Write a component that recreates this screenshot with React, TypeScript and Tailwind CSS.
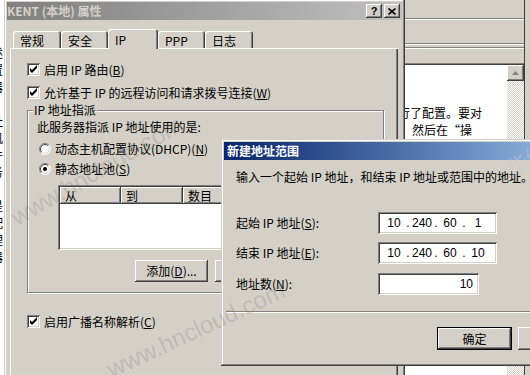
import React from 'react';

const raised =
  'bg-[#d4d0c8] shadow-[inset_-1px_-1px_#404040,inset_1px_1px_#ffffff,inset_-2px_-2px_#808080]';
const sunken =
  'bg-white shadow-[inset_1px_1px_#808080,inset_-1px_-1px_#ffffff,inset_2px_2px_#404040,inset_-2px_-2px_#d4d0c8]';
const frame =
  'bg-[#d4d0c8] shadow-[inset_-1px_-1px_#404040,inset_1px_1px_#d4d0c8,inset_-2px_-2px_#808080,inset_2px_2px_#ffffff]';

function Check({ checked = false }: { checked?: boolean }) {
  return (
    <span className={`relative block w-[13px] h-[13px] shrink-0 ${sunken}`}>
      {checked && (
        <svg className="absolute left-0 top-0" width="13" height="13" viewBox="0 0 13 13">
          <path d="M3 5 L5 7 L10 2 L10 5 L5 10 L3 8 Z" fill="#000" />
        </svg>
      )}
    </span>
  );
}

function Radio({ on = false }: { on?: boolean }) {
  return (
    <svg width="12" height="12" viewBox="0 0 12 12" className="shrink-0">
      <circle cx="6" cy="6" r="5.5" fill="#fff" />
      <path d="M2.1 9.9 A5.5 5.5 0 0 1 9.9 2.1" fill="none" stroke="#808080" />
      <path d="M2.8 9.2 A4.5 4.5 0 0 1 9.2 2.8" fill="none" stroke="#404040" />
      <path d="M9.9 2.1 A5.5 5.5 0 0 1 2.1 9.9" fill="none" stroke="#ffffff" />
      <path d="M9.2 2.8 A4.5 4.5 0 0 1 2.8 9.2" fill="none" stroke="#d4d0c8" />
      {on && <circle cx="6" cy="6" r="2" fill="#000" />}
    </svg>
  );
}

function IpBox({ parts }: { parts: string[] }) {
  return (
    <div className={`w-[119px] h-[22px] shrink-0 flex items-center pl-[5px] font-['Liberation_Sans',sans-serif] text-[12px] ${sunken}`}>
      {parts.map((p, i) => (
        <React.Fragment key={i}>
          {i > 0 && <span className="w-[6px] text-center">.</span>}
          <span className="w-[22px] text-center">{p}</span>
        </React.Fragment>
      ))}
    </div>
  );
}

const tabs = [
  { label: '常规', w: 'w-[48px]' },
  { label: '安全', w: 'w-[47px]' },
  { label: 'IP', w: 'w-[50px]', sel: true },
  { label: 'PPP', w: 'w-[47px]' },
  { label: '日志', w: 'w-[48px]' },
];

const sideChars = ['述', '置', '器', '。', '址', '机', '件', '务', '，', '是', '配', '理', '器'];

export default function App() {
  return (
    <div className="relative w-[530px] h-[375px] overflow-hidden bg-[#d4d0c8] text-black text-[12px] leading-[14px] font-['Noto_Sans_CJK_SC',sans-serif]">
      {/* window behind, left edge */}
      <div className="absolute left-0 top-0 w-[5px] h-full bg-white overflow-hidden">
        <div className="ml-[-9px] pt-[44px] flex flex-col leading-[17px]">
          {sideChars.map((c, i) => (
            <span key={i}>{c}</span>
          ))}
        </div>
      </div>

      {/* window behind, right side */}
      <div className="absolute left-[380px] top-0 w-[150px] h-[375px] bg-[#d4d0c8]">
        <div className="w-[145px] h-full border-r border-[#404040] flex flex-col">
          <div className="h-[18px] shrink-0" />
          <div className="h-px bg-[#808080] shrink-0" />
          <div className="h-px bg-white shrink-0" />
          <div className="h-[23px] shrink-0" />
          <div className="h-px bg-[#808080] shrink-0" />
          <div className="h-px bg-white shrink-0" />
          <div className="h-[2px] shrink-0" />
          <div className="h-px bg-[#808080] shrink-0" />
          <div className="h-px bg-white shrink-0" />
          <div className="h-[14px] shrink-0" />
          <div className="h-px bg-[#808080] shrink-0" />
          <div className="h-px bg-[#404040] shrink-0" />
          <div className="flex flex-1 bg-white">
            <div className="w-[127px] pt-[39px] leading-[17px] whitespace-nowrap overflow-hidden">
              <div className="pl-[18px]">行了配置。要对</div>
              <div className="pl-[32px]">然后在“操</div>
            </div>
            <div className="w-[17px] bg-[repeating-conic-gradient(#d4d0c8_0%_25%,#ffffff_0%_50%)] bg-[length:2px_2px]">
              <div className={`h-[16px] flex items-center justify-center ${raised}`}>
                <svg width="7" height="4" viewBox="0 0 7 4">
                  <path d="M3.5 0 L7 4 L0 4 Z" fill="#808080" />
                </svg>
              </div>
            </div>
          </div>
        </div>
      </div>

      {/* properties dialog */}
      <div className={`absolute left-[4px] top-[-1px] w-[401px] h-[392px] p-[3px] ${frame}`}>
        <div className="h-[18px] flex items-center justify-between pr-[2px] bg-linear-to-r from-[#808080] to-[#c0c0c0]">
          <span className="font-bold text-[#d4d0c8] whitespace-nowrap">KENT (本地) 属性</span>
          <div className="flex gap-[2px]">
            <div className={`w-[16px] h-[14px] flex items-center justify-center font-['Liberation_Sans',sans-serif] font-bold text-[11px] ${raised}`}>?</div>
            <div className={`w-[16px] h-[14px] flex items-center justify-center ${raised}`}>
              <svg width="8" height="7" viewBox="0 0 8 7">
                <path d="M0.5 0.5 L7.5 6.5 M7.5 0.5 L0.5 6.5" stroke="#000" strokeWidth="1.6" />
              </svg>
            </div>
          </div>
        </div>

        <div className="ml-[3px] mt-[9px] w-[388px]">
          <div className="flex items-end h-[19px] pl-[3px]">
            {tabs.map((t) =>
              t.sel ? (
                <div
                  key={t.label}
                  className={`relative z-10 -mb-px h-[20px] ${t.w} shrink-0 pl-[7px] pt-[4px] bg-[#d4d0c8] rounded-t-[3px] shadow-[inset_1px_1px_#ffffff,inset_-1px_0_#404040,inset_-2px_0_#808080]`}
                >
                  {t.label}
                </div>
              ) : (
                <div
                  key={t.label}
                  className={`h-[17px] ${t.w} shrink-0 pl-[7px] pt-[3px] bg-[#d4d0c8] rounded-t-[3px] shadow-[inset_1px_1px_#ffffff,inset_-1px_0_#404040,inset_-2px_0_#808080]`}
                >
                  {t.label}
                </div>
              )
            )}
          </div>

          <div className="h-[330px] pl-[17px] pt-[15px] shadow-[inset_1px_1px_#ffffff,inset_-1px_-1px_#404040,inset_-2px_-2px_#808080]">
            <div className="flex items-center gap-[4px] h-[13px]">
              <Check checked />
              <span className="whitespace-nowrap">启用 IP 路由(<u>B</u>)</span>
            </div>
            <div className="mt-[10px] flex items-center gap-[4px] h-[13px]">
              <Check checked />
              <span className="whitespace-nowrap">允许基于 IP 的远程访问和请求拨号连接(<u>W</u>)</span>
            </div>

            <div className="relative mt-[11px] w-[357px] border border-[#808080] shadow-[inset_1px_1px_#ffffff,1px_1px_#ffffff] pl-[9px] pt-[9px] pb-[10px]">
              <span className="absolute left-[5px] top-[-8px] px-[1px] bg-[#d4d0c8] whitespace-nowrap">IP 地址指派</span>
              <div className="whitespace-nowrap">此服务器指派 IP 地址使用的是:</div>
              <div className="mt-[8px] ml-[2px] flex items-center gap-[4px] h-[13px]">
                <Radio />
                <span className="whitespace-nowrap">动态主机配置协议(DHCP)(<u>N</u>)</span>
              </div>
              <div className="mt-[7px] ml-[2px] flex items-center gap-[4px] h-[13px]">
                <Radio on />
                <span className="whitespace-nowrap">静态地址池(<u>S</u>)</span>
              </div>

              <div className={`mt-[10px] ml-[21px] w-[312px] h-[65px] p-[2px] ${sunken}`}>
                <div className="flex h-[17px]">
                  <div className={`w-[61px] pl-[5px] flex items-center ${raised}`}>从</div>
                  <div className={`w-[62px] pl-[5px] flex items-center ${raised}`}>到</div>
                  <div className={`flex-1 pl-[5px] flex items-center ${raised}`}>数目</div>
                </div>
              </div>

              <div className="mt-[10px] ml-[98px] flex gap-[7px]">
                <div className={`w-[73px] h-[22px] shrink-0 flex items-center justify-center whitespace-nowrap ${raised}`}>
                  添加(<u>D</u>)...
                </div>
                <div className={`w-[75px] h-[22px] shrink-0 flex items-center justify-center whitespace-nowrap ${raised}`}>
                  编辑(<u>E</u>)...
                </div>
              </div>
            </div>

            <div className="mt-[22px] flex items-center gap-[4px] h-[13px]">
              <Check checked />
              <span className="whitespace-nowrap">启用广播名称解析(<u>C</u>)</span>
            </div>
          </div>
        </div>
      </div>

      {/* new range dialog */}
      <div className={`absolute left-[221px] top-[139px] w-[380px] h-[227px] p-[3px] ${frame}`}>
        <div className="h-[18px] flex items-center pl-[3px] bg-linear-to-r from-[#0a246a] to-[#a6caf0] text-white font-bold whitespace-nowrap">
          新建地址范围
        </div>
        <div className="pl-[12px] pt-[10px]">
          <div className="whitespace-nowrap">输入一个起始 IP 地址，和结束 IP 地址或范围中的地址。</div>
          <div className="mt-[28px] flex items-center h-[22px]">
            <span className="w-[142px] shrink-0 whitespace-nowrap">起始 IP 地址(<u>S</u>):</span>
            <IpBox parts={['10', '240', '60', '1']} />
          </div>
          <div className="mt-[8px] flex items-center h-[22px]">
            <span className="w-[142px] shrink-0 whitespace-nowrap">结束 IP 地址(<u>E</u>):</span>
            <IpBox parts={['10', '240', '60', '10']} />
          </div>
          <div className="mt-[9px] flex items-center h-[22px]">
            <span className="w-[142px] shrink-0 whitespace-nowrap">地址数(<u>N</u>):</span>
            <div className={`w-[101px] h-[22px] shrink-0 flex items-center justify-end pr-[6px] font-['Liberation_Sans',sans-serif] ${sunken}`}>
              10
            </div>
          </div>
        </div>
        <div className="mt-[16px] ml-[2px] h-[2px] border-t border-t-[#808080] border-b border-b-white" />
        <div className="mt-[14px] pl-[213px] flex gap-[6px]">
          <div className="w-[75px] h-[23px] shrink-0 border border-black">
            <div className={`w-full h-full flex items-center justify-center ${raised}`}>确定</div>
          </div>
          <div className={`w-[75px] h-[23px] shrink-0 flex items-center justify-center ${raised}`}>取消</div>
        </div>
      </div>

      {/* watermark */}
      <div className="absolute inset-0 pointer-events-none">
        <span className="absolute left-[97px] top-[171px] -translate-x-1/2 -translate-y-1/2 -rotate-[30deg] whitespace-nowrap font-['Liberation_Sans',sans-serif] text-[24px] leading-[28px] text-[rgba(110,110,110,0.22)]">
          www.hncloud.com
        </span>
        <span className="absolute left-[196px] top-[330px] -translate-x-1/2 -translate-y-1/2 -rotate-[25deg] whitespace-nowrap font-['Liberation_Sans',sans-serif] text-[24px] leading-[28px] text-[rgba(110,110,110,0.22)]">
          www.hncloud.com
        </span>
        <span className="absolute left-[503px] top-[140px] -rotate-[30deg] whitespace-nowrap text-[22px] leading-[26px] text-[rgba(200,200,200,0.45)]">
          华纳云
        </span>
      </div>
    </div>
  );
}
